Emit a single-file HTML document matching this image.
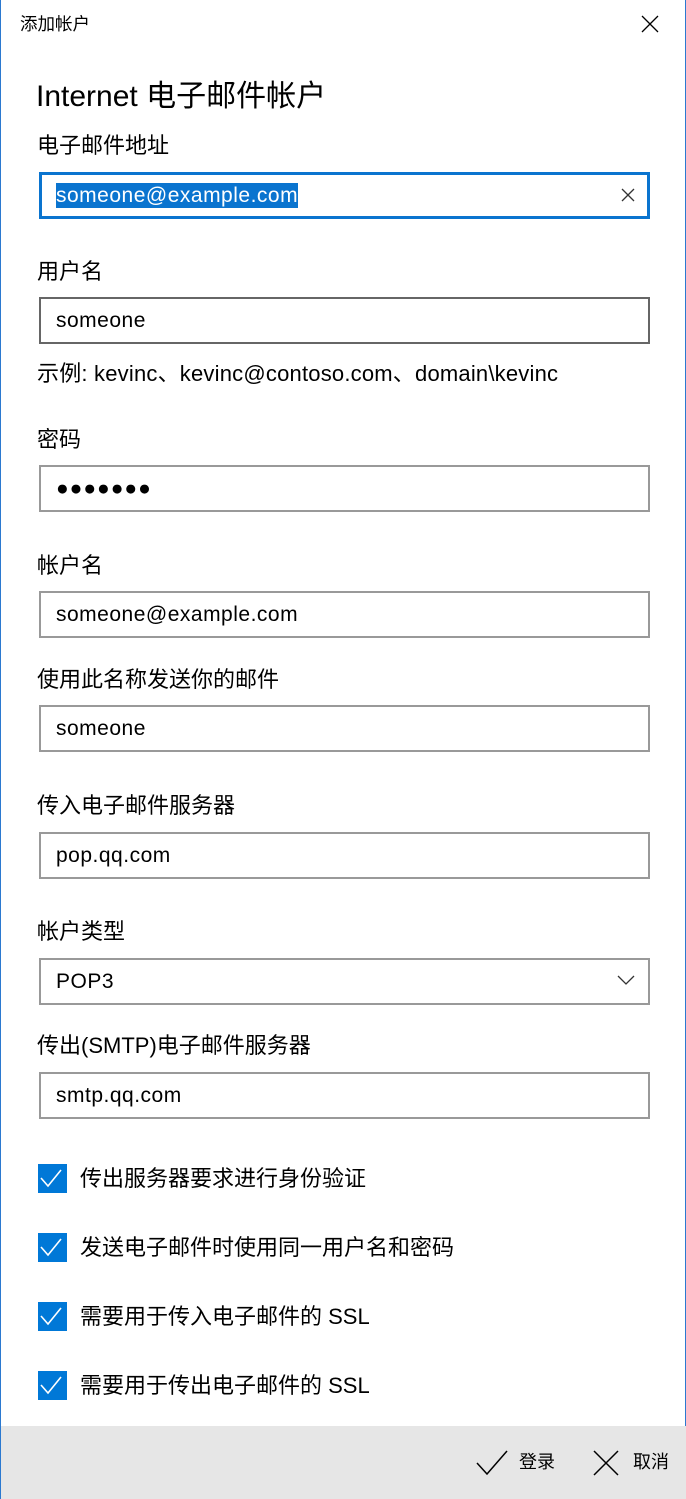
<!DOCTYPE html>
<html><head><meta charset="utf-8">
<style>
*{margin:0;padding:0;box-sizing:border-box}
html,body{width:686px;height:1499px;overflow:hidden;background:#fff}
body{position:relative;font-family:"Liberation Sans","Noto Sans CJK SC",sans-serif;color:#000;border-left:1px solid #2b79d0;border-right:1px solid #2b79d0}
.a{position:absolute;white-space:nowrap}
.lbl{font-size:22px;left:36px;line-height:28px}
.inp{position:absolute;left:38px;width:611px;height:47px;border:2px solid #999;font-size:21px;letter-spacing:0.5px;line-height:43px;padding-left:15px}
.cb{position:absolute;left:37px;width:29px;height:29px;background:#0078d7}
.cbt{position:absolute;left:79px;font-size:22px;line-height:29px}
</style></head><body>
<div class="a" style="left:19px;top:12px;font-size:17.5px;line-height:24px">添加帐户</div>
<svg class="a" style="left:640px;top:15px" width="18" height="18"><path d="M1 1L17 17M17 1L1 17" stroke="#000" stroke-width="1.3"/></svg>
<div class="a" style="left:35px;top:78px;font-size:30px;line-height:38px">Internet 电子邮件帐户</div>

<div class="a lbl" style="top:132px">电子邮件地址</div>
<div class="inp" style="top:172px;border:3px solid #0a74cf;line-height:41px;padding-left:14px"><span style="background:#0a74cf;color:#fff;padding:1px 0">someone@example.com</span></div>
<svg class="a" style="left:620px;top:188px" width="14" height="14"><path d="M1 1L13 13M13 1L1 13" stroke="#333" stroke-width="1.3"/></svg>

<div class="a lbl" style="top:258px">用户名</div>
<div class="inp" style="top:297px;border-color:#666">someone</div>
<div class="a lbl" style="top:360px;letter-spacing:0.2px">示例: kevinc、kevinc@contoso.com、domain\kevinc</div>

<div class="a lbl" style="top:426px">密码</div>
<div class="inp" style="top:465px;letter-spacing:1px">●●●●●●●</div>

<div class="a lbl" style="top:552px">帐户名</div>
<div class="inp" style="top:591px">someone@example.com</div>

<div class="a lbl" style="top:666px">使用此名称发送你的邮件</div>
<div class="inp" style="top:705px">someone</div>

<div class="a lbl" style="top:792px">传入电子邮件服务器</div>
<div class="inp" style="top:832px">pop.qq.com</div>

<div class="a lbl" style="top:918px">帐户类型</div>
<div class="inp" style="top:958px">POP3</div>
<svg class="a" style="left:616px;top:974px" width="18" height="12"><path d="M1 2L9 10L17 2" stroke="#333" stroke-width="1.3" fill="none"/></svg>

<div class="a lbl" style="top:1032px">传出(SMTP)电子邮件服务器</div>
<div class="inp" style="top:1072px">smtp.qq.com</div>

<div class="cb" style="top:1164px"><svg width="29" height="29"><path d="M3 14L10 22L23 6" stroke="#fff" stroke-width="1.6" fill="none"/></svg></div>
<div class="cbt" style="top:1164px">传出服务器要求进行身份验证</div>
<div class="cb" style="top:1233px"><svg width="29" height="29"><path d="M3 14L10 22L23 6" stroke="#fff" stroke-width="1.6" fill="none"/></svg></div>
<div class="cbt" style="top:1233px">发送电子邮件时使用同一用户名和密码</div>
<div class="cb" style="top:1302px"><svg width="29" height="29"><path d="M3 14L10 22L23 6" stroke="#fff" stroke-width="1.6" fill="none"/></svg></div>
<div class="cbt" style="top:1302px">需要用于传入电子邮件的 SSL</div>
<div class="cb" style="top:1371px"><svg width="29" height="29"><path d="M3 14L10 22L23 6" stroke="#fff" stroke-width="1.6" fill="none"/></svg></div>
<div class="cbt" style="top:1371px">需要用于传出电子邮件的 SSL</div>

<div class="a" style="left:0;top:1426px;width:686px;height:73px;background:#e6e6e6"></div>
<svg class="a" style="left:475px;top:1450px" width="32" height="26"><path d="M1 13L11 24L31 1" stroke="#000" stroke-width="1.5" fill="none"/></svg>
<div class="a" style="left:518px;top:1450px;font-size:18px;line-height:24px">登录</div>
<svg class="a" style="left:592px;top:1450px" width="26" height="26"><path d="M1 1L25 25M25 1L1 25" stroke="#000" stroke-width="1.5"/></svg>
<div class="a" style="left:632px;top:1450px;font-size:18px;line-height:24px">取消</div>
</body></html>
